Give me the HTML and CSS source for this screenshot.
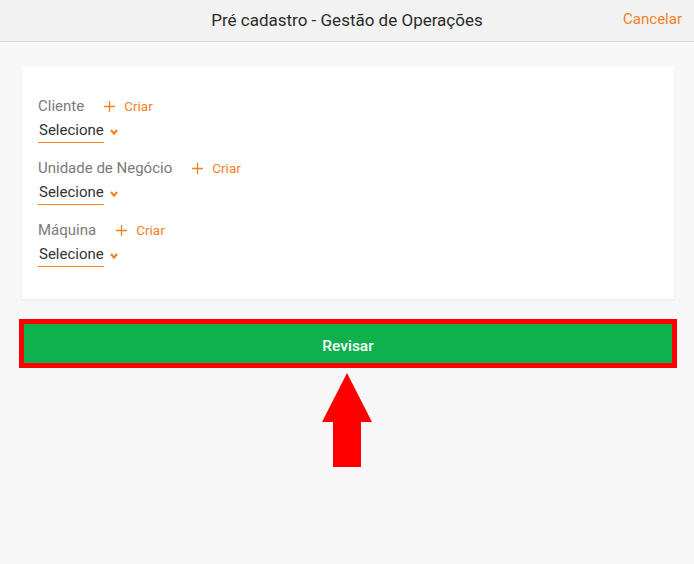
FILE: index.html
```html
<!DOCTYPE html>
<html lang="pt-BR">
<head>
<meta charset="utf-8">
<title>Pré cadastro - Gestão de Operações</title>
<link rel="stylesheet" href="styles.css">
</head>
<body>
<header class="topbar">
  <h1 class="title">Pré cadastro - Gestão de Operações</h1>
  <a class="cancel" href="#">Cancelar</a>
</header>
<main class="content">
  <section class="card">
    <div class="field">
      <div class="field-head">
        <span class="label">Cliente</span>
        <a class="create" href="#"><svg class="plus" viewBox="0 0 11 11" width="11" height="11"><path d="M5.5 0v11M0 5.5h11" stroke="#f5801f" stroke-width="1.3" fill="none"/></svg>Criar</a>
      </div>
      <div class="select"><span class="select-text">Selecione</span><svg class="chev" viewBox="0 0 8 6" width="8" height="6"><path d="M1 1l3 3.6 3-3.6" stroke="#f5801f" stroke-width="2.2" fill="none"/></svg></div>
    </div>
    <div class="field">
      <div class="field-head">
        <span class="label">Unidade de Negócio</span>
        <a class="create" href="#"><svg class="plus" viewBox="0 0 11 11" width="11" height="11"><path d="M5.5 0v11M0 5.5h11" stroke="#f5801f" stroke-width="1.3" fill="none"/></svg>Criar</a>
      </div>
      <div class="select"><span class="select-text">Selecione</span><svg class="chev" viewBox="0 0 8 6" width="8" height="6"><path d="M1 1l3 3.6 3-3.6" stroke="#f5801f" stroke-width="2.2" fill="none"/></svg></div>
    </div>
    <div class="field">
      <div class="field-head">
        <span class="label">Máquina</span>
        <a class="create" href="#"><svg class="plus" viewBox="0 0 11 11" width="11" height="11"><path d="M5.5 0v11M0 5.5h11" stroke="#f5801f" stroke-width="1.3" fill="none"/></svg>Criar</a>
      </div>
      <div class="select"><span class="select-text">Selecione</span><svg class="chev" viewBox="0 0 8 6" width="8" height="6"><path d="M1 1l3 3.6 3-3.6" stroke="#f5801f" stroke-width="2.2" fill="none"/></svg></div>
    </div>
  </section>
  <div class="highlight">
    <button class="review" type="button">Revisar</button>
  </div>
  <div class="arrow-wrap">
    <svg class="arrow" viewBox="0 0 50 94" width="50" height="94"><path d="M25 0L50 49H39V94H11V49H0Z" fill="#ff0000"/></svg>
  </div>
</main>
</body>
</html>
```
FILE: styles.css
```css
* { box-sizing: border-box; }
html, body { margin: 0; padding: 0; }
body {
  background: #f7f7f7;
  font-family: Roboto, "Noto Sans", "Liberation Sans", sans-serif;
  width: 694px;
  height: 564px;
  overflow: hidden;
}
.topbar {
  height: 42px;
  background: #f2f2f2;
  border-bottom: 1px solid #d9d9d9;
  display: flex;
  align-items: center;
  justify-content: center;
  position: relative;
}
.title {
  margin: 0 0 2px 0;
  font-size: 17px;
  font-weight: 400;
  color: #2b2b2b;
}
.cancel {
  position: absolute;
  right: 12px;
  top: 10px;
  font-size: 15px;
  color: #f5801f;
  text-decoration: none;
}
.content {
  padding: 24px 20px 0 22px;
}
.card {
  background: #fff;
  height: 233px;
  padding: 30px 16px 0 16px;
  box-shadow: 0 1px 2px rgba(0,0,0,0.06);
  display: flex;
  flex-direction: column;
  gap: 15px;
}
.field { display: flex; flex-direction: column; align-items: flex-start; }
.field-head {
  display: flex;
  align-items: center;
  height: 20px;
}
.label {
  font-size: 15px;
  color: #7a7a7a;
}
.create {
  display: flex;
  align-items: center;
  margin-left: 20px;
  font-size: 13.5px;
  color: #f5801f;
  text-decoration: none;
}
.plus { margin-right: 9px; }
.select {
  display: flex;
  align-items: baseline;
  margin-top: 4px;
}
.select-text {
  font-size: 15px;
  color: #333;
  padding: 0 0 2px 1px;
  border-bottom: 1px solid #f5801f;
  line-height: 20px;
}
.chev { margin-left: 6px; }
.highlight {
  margin: 20px -3px 0 -3px;
  border: 5px solid #ff0000;
}
.review {
  display: block;
  width: 100%;
  height: 39px;
  border: 0;
  padding: 4px 0 0 0;
  background: #0fb04e;
  color: #fff;
  font-family: inherit;
  font-size: 15.5px;
  font-weight: 500;
}
.arrow-wrap {
  display: flex;
  justify-content: center;
  margin: 5px 0 0 -2px;
}
.arrow { display: block; }
```
